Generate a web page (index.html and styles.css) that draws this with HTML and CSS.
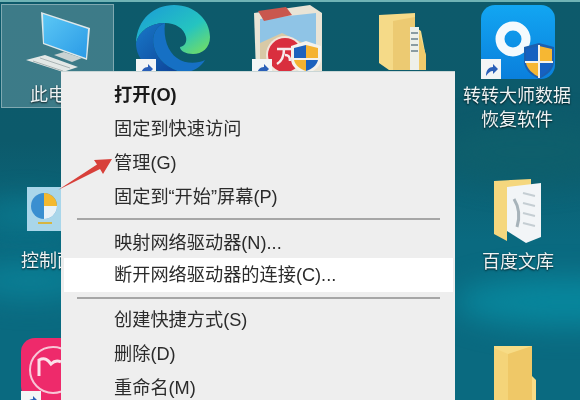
FILE: index.html
```html
<!DOCTYPE html>
<html lang="zh-CN">
<head>
    <meta charset="UTF-8">
    <title>桌面右键菜单</title>
    <link rel="stylesheet" href="styles.css">
</head>
<body>
    <div class="desktop">
        <div class="glow glow-top"></div>
        <div class="glow glow-mid"></div>
        <div class="glow glow-low"></div>
        <div class="glow glow-left"></div>

        <!-- desktop icons -->
        <div class="tile"></div>
        <svg class="icon icon-pc" viewBox="0 0 100 80">
            <defs>
                <linearGradient id="screen" x1="0" y1="0" x2="1" y2="1">
                    <stop offset="0" stop-color="#5cc8f5"/>
                    <stop offset="1" stop-color="#2a9ae6"/>
                </linearGradient>
            </defs>
            <polygon points="41,12 90,28 87,60 43,44" fill="#dfe8ea"/>
            <polygon points="43,14 88,29 86,58 44,43" fill="url(#screen)"/>
            <polygon points="54,55 64,52 82,58 72,62" fill="#c9d2d2"/>
            <polygon points="26,60 45,55 78,67 63,72" fill="#e3e8e6"/>
            <path d="M33 61l30 10M40 58l30 10" stroke="#aab4b4" stroke-width="1"/>
        </svg>
        <svg class="icon icon-edge" viewBox="0 0 74 68">
            <defs>
                <linearGradient id="edgeTop" x1="0" y1="0" x2="1" y2="1">
                    <stop offset="0" stop-color="#1a9ad8"/>
                    <stop offset="0.6" stop-color="#25c4c0"/>
                    <stop offset="1" stop-color="#7be05a"/>
                </linearGradient>
                <linearGradient id="edgeLow" x1="0" y1="0" x2="1" y2="1">
                    <stop offset="0" stop-color="#1878c8"/>
                    <stop offset="1" stop-color="#0d3f94"/>
                </linearGradient>
            </defs>
            <path d="M0 38C1 14 18 0 38 0c21 0 36 15 36 32 0 11-8 17-17 17-7 0-13-3-13-7 5-1 7-5 6-10-2-9-11-14-21-14C14 18 3 26 0 38z" fill="url(#edgeTop)"/>
            <path d="M0 38C3 26 14 18 29 18c-9 3-14 12-11 24 3 13 15 22 29 26h-9C15 68 0 56 0 38z" fill="url(#edgeLow)"/>
            <path d="M29 18c-9 3-14 12-11 24 3 13 15 22 29 26 10-1 18-6 22-13-8 4-20 4-28-2-9-6-14-20-12-35z" fill="#1670c4"/>
        </svg>
        <svg class="icon icon-photos" viewBox="0 0 72 68">
            <polygon points="2,8 58,0 70,8 70,68 4,68" fill="#e9e4d6"/>
            <polygon points="8,14 64,8 64,48 8,52" fill="#8fc4e6"/>
            <polygon points="6,6 34,2 40,10 12,16" fill="#c9574e"/>
            <polygon points="8,38 30,28 64,44 64,60 8,60" fill="#d8c9a6"/>
            <circle cx="33" cy="50" r="19" fill="#f2e6dc"/>
            <circle cx="33" cy="50" r="17" fill="#d92f3e"/>
            <path d="M25 44h14M32 44c0 7-2 12-7 15M33 50c3 0 5 1 5 6" fill="none" stroke="#f7ecec" stroke-width="2.500"/>
            <path d="M54 36l15 5v13c0 7-6 12-15 15-9-3-15-8-15-15V41z" fill="#f4f2ec"/>
            <path d="M54 40v13H42V43z" fill="#1d62bd"/>
            <path d="M54 40l12 3v10H54z" fill="#f5b331"/>
            <path d="M54 55v11c-6-2-11-6-12-11z" fill="#f5b331"/>
            <path d="M54 55h12c-1 5-6 9-12 11z" fill="#1d62bd"/>
        </svg>
        <svg class="icon icon-folder" viewBox="0 0 47 57">
            <polygon points="0,2 36,0 36,14 42,18 47,44 47,57 10,57 0,50" fill="#f5da88"/>
            <polygon points="14,8 36,4 36,57 14,57" fill="#ecca72"/>
            <rect x="31" y="14" width="9" height="43" fill="#eef0ea"/>
            <path d="M32 20h7M32 26h7M32 32h7M32 38h7" stroke="#8a9ca3" stroke-width="2"/>
            <polygon points="40,20 47,42 47,57 40,57" fill="#f0cb6c"/>
        </svg>
        <svg class="icon icon-app" viewBox="0 0 74 76">
            <defs>
                <linearGradient id="appBg" x1="0" y1="0" x2="0" y2="1">
                    <stop offset="0" stop-color="#12a6f2"/>
                    <stop offset="1" stop-color="#0a7fdc"/>
                </linearGradient>
            </defs>
            <rect width="74" height="74" rx="14" fill="url(#appBg)"/>
            <circle cx="32" cy="34" r="13" fill="none" stroke="#f4fafd" stroke-width="9"/>
            <path d="M58 38l15 4v14c0 9-7 14-15 18-8-4-15-9-15-18V42z" fill="#1c5fae"/>
            <path d="M58 41v15H45V44z" fill="#1661c0"/>
            <path d="M58 41l13 3v12H58z" fill="#f6b733"/>
            <path d="M58 58v14c-6-3-12-8-13-14z" fill="#f6b733"/>
            <path d="M58 58h13c-1 6-7 11-13 14z" fill="#1661c0"/>
            <path d="M58 40v33M44 57h28" stroke="#f4f2ea" stroke-width="2"/>
        </svg>
        <svg class="icon icon-folder2" viewBox="0 0 47 64">
            <polygon points="0,2 37,0 37,50 13,50 13,62 0,55" fill="#f5d77e"/>
            <polygon points="13,8 47,4 47,58 32,64 13,52" fill="#f2f5f7"/>
            <path d="M20 20c5 8 6 18 3 28" stroke="#a7b3ba" stroke-width="3" fill="none"/>
            <path d="M29 14l12 3M29 24l12 3M29 34l12 3M29 44l12 3" stroke="#c5ced3" stroke-width="2"/>
        </svg>
        <svg class="icon icon-folder3" viewBox="0 0 42 54">
            <polygon points="0,0 38,0 38,30 42,34 42,54 0,54" fill="#f7dc86"/>
            <polygon points="0,2 14,8 14,54 0,54" fill="#f4d479"/>
            <polygon points="14,8 38,0 38,54 14,54" fill="#efc867"/>
        </svg>
        <svg class="icon icon-control" viewBox="0 0 34 44">
            <rect width="34" height="44" fill="#a9d6ea"/>
            <circle cx="17" cy="19" r="13" fill="#3a8fd0"/>
            <path d="M17 19V6a13 13 0 0 1 13 13z" fill="#f4b92f"/>
            <path d="M17 19h13a13 13 0 0 1-13 13z" fill="#e9f2f7"/>
            <path d="M11 36h14" stroke="#d6b542" stroke-width="2"/>
        </svg>
        <svg class="icon icon-pink" viewBox="0 0 40 62">
            <rect width="56" height="62" rx="14" fill="#ee2a6b"/>
            <circle cx="32" cy="32" r="23" fill="none" stroke="#f8c5d6" stroke-width="2"/>
            <path d="M18 38V22c6-3 9 0 12 4 3-3 6-4 10-2" fill="none" stroke="#fbe1ea" stroke-width="3"/>
        </svg>
        <svg class="shortcut shortcut-edge" viewBox="0 0 20 20">
            <rect width="20" height="20" fill="#f3f5f6"/>
            <path d="M5 17c0-6 3-9 7-9V5l5 5-5 5v-3c-3 0-5 2-7 5z" fill="#2a5fb8"/>
        </svg>
        <svg class="shortcut shortcut-photos" viewBox="0 0 20 20">
            <rect width="20" height="20" fill="#f3f5f6"/>
            <path d="M5 17c0-6 3-9 7-9V5l5 5-5 5v-3c-3 0-5 2-7 5z" fill="#2a5fb8"/>
        </svg>
        <svg class="shortcut shortcut-app" viewBox="0 0 20 20">
            <rect width="20" height="20" fill="#f3f5f6"/>
            <path d="M5 17c0-6 3-9 7-9V5l5 5-5 5v-3c-3 0-5 2-7 5z" fill="#2a5fb8"/>
        </svg>
        <svg class="shortcut shortcut-pink" viewBox="0 0 20 20">
            <rect width="20" height="20" fill="#f3f5f6"/>
            <path d="M5 17c0-6 3-9 7-9V5l5 5-5 5v-3c-3 0-5 2-7 5z" fill="#2a5fb8"/>
        </svg>

        <span class="label label-pc">此电脑</span>
        <span class="label label-control">控制面板</span>
        <span class="label label-app">转转大师数据<br>恢复软件</span>
        <span class="label label-wenku">百度文库</span>

        <!-- context menu -->
        <div class="menu">
            <div class="menu-item menu-default">打开(O)</div>
            <div class="menu-item">固定到快速访问</div>
            <div class="menu-item">管理(G)</div>
            <div class="menu-item">固定到“开始”屏幕(P)</div>
            <div class="menu-sep menu-sep-first"></div>
            <div class="menu-item">映射网络驱动器(N)...</div>
            <div class="menu-item menu-hover">断开网络驱动器的连接(C)...</div>
            <div class="menu-sep menu-sep-second"></div>
            <div class="menu-item">创建快捷方式(S)</div>
            <div class="menu-item">删除(D)</div>
            <div class="menu-item">重命名(M)</div>
        </div>

        <svg class="arrow" viewBox="0 0 580 400">
            <path d="M58 190L97 164.500 94 160 112 159 103 174 100 169z" fill="#d8403a"/>
        </svg>
    </div>
</body>
</html>
```

FILE: styles.css
```css
html, body {
    margin: 0;
    padding: 0;
}
body {
    width: 580px;
    height: 400px;
    overflow: hidden;
    font-family: "Liberation Sans", "Noto Sans CJK SC", sans-serif;
}
.desktop {
    position: relative;
    width: 580px;
    height: 400px;
    overflow: hidden;
    background: linear-gradient(180deg, #0d5a6b 0%, #0c5a6b 35%, #0a6a80 60%, #0a6a80 100%);
    border-top: 2px solid #6fb3b5;
    box-sizing: border-box;
}

/* soft bands in the wallpaper */
.glow {
    position: absolute;
    border-radius: 50%;
    filter: blur(14px);
}
.glow-top {
    left: 440px;
    top: 120px;
    width: 180px;
    height: 60px;
    background: #0e5f6c;
}
.glow-mid {
    left: 455px;
    top: 275px;
    width: 220px;
    height: 50px;
    background: #08869c;
}
.glow-low {
    left: -30px;
    top: 262px;
    width: 120px;
    height: 34px;
    background: #0a8096;
}
.glow-left {
    left: -20px;
    top: 200px;
    width: 90px;
    height: 26px;
    background: #0a7a90;
}

.tile {
    position: absolute;
    left: 1px;
    top: 2px;
    width: 113px;
    height: 104px;
    box-sizing: border-box;
    background: rgba(255, 255, 255, 0.2);
    border: 1px solid rgba(255, 255, 255, 0.35);
}

.icon, .shortcut {
    position: absolute;
    filter: blur(0.4px);
}
.icon-pc { left: 0; top: -2px; width: 100px; height: 80px; }
.icon-edge { left: 136px; top: 3px; width: 74px; height: 68px; }
.icon-photos { left: 252px; top: 3px; width: 72px; height: 68px; }
.icon-folder { left: 379px; top: 11px; width: 47px; height: 57px; }
.icon-app { left: 481px; top: 3px; width: 74px; height: 76px; }
.icon-folder2 { left: 494px; top: 177px; width: 47px; height: 64px; }
.icon-folder3 { left: 494px; top: 344px; width: 42px; height: 54px; }
.icon-control { left: 27px; top: 185px; width: 34px; height: 44px; }
.icon-pink { left: 21px; top: 336px; width: 40px; height: 62px; }

.shortcut { width: 20px; height: 20px; }
.shortcut-edge { left: 136px; top: 57px; }
.shortcut-photos { left: 252px; top: 57px; }
.shortcut-app { left: 481px; top: 57px; }
.shortcut-pink { left: 21px; top: 389px; }

.label {
    position: absolute;
    color: #eef3f4;
    font-size: 18px;
    line-height: 24px;
    text-align: center;
    white-space: nowrap;
    text-shadow: 0 1px 2px rgba(0, 0, 0, 0.8);
    filter: blur(0.4px);
}
.label-pc { left: 30px; top: 81px; }
.label-control { left: 21px; top: 247px; }
.label-app { left: 463px; top: 82px; }
.label-wenku { left: 482px; top: 248px; }

.menu {
    position: absolute;
    left: 61px;
    top: 69px;
    width: 394px;
    height: 340px;
    box-sizing: border-box;
    padding: 6px 2px 0 3px;
    background: #eeeeee;
    border-top: 1px solid #c9d6d6;
    filter: blur(0.4px);
}
.menu-item {
    height: 34px;
    line-height: 34px;
    padding-left: 50px;
    font-size: 18.2px;
    color: #2b2b2b;
    white-space: nowrap;
}
.menu-default {
    font-weight: bold;
    color: #1a1a1a;
}
.menu-hover {
    margin-top: -2px;
    background: #ffffff;
}
.menu-sep {
    height: 1.5px;
    margin-left: 13px;
    margin-right: 13px;
    background: #a6a6a6;
}
.menu-sep-first {
    margin-top: 4px;
    margin-bottom: 6.5px;
}
.menu-sep-second {
    margin-top: 5px;
    margin-bottom: 4.5px;
}

.arrow {
    position: absolute;
    left: 0;
    top: -2px;
    width: 580px;
    height: 400px;
}
```
